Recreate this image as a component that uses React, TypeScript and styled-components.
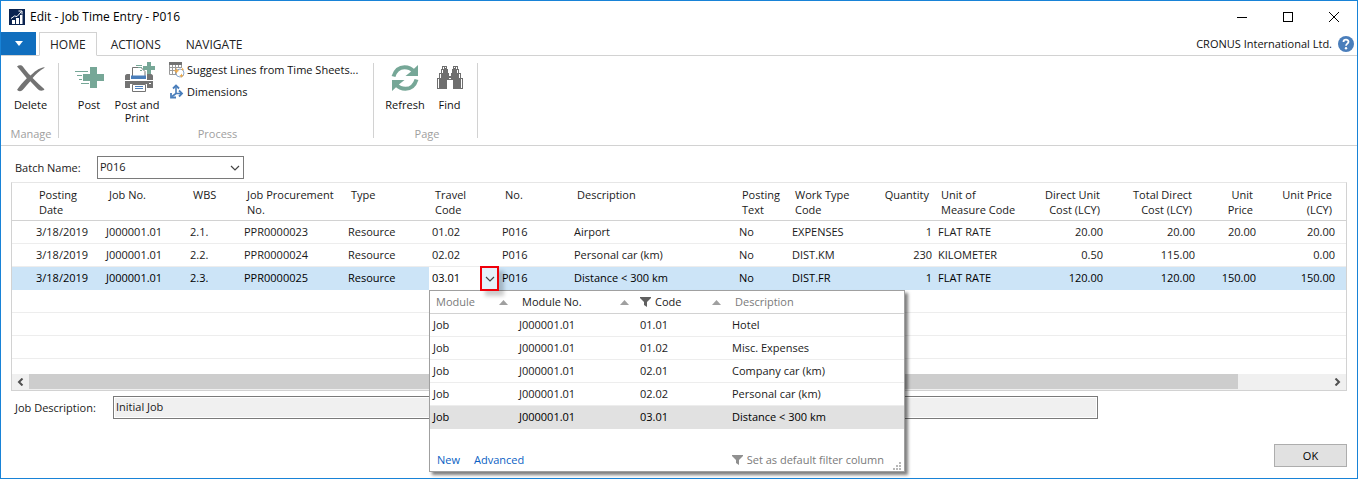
import React from 'react';
import styled, { createGlobalStyle, css } from 'styled-components';

const GlobalStyle = createGlobalStyle`
  * { box-sizing: border-box; }
  body {
    margin: 0;
    background: #fff;
    color: #1a1a1a;
    font-family: 'Open Sans', 'Noto Sans', sans-serif;
    font-size: 11px;
    line-height: 16px;
  }
  button, input, select { font: inherit; color: inherit; }
`;

const Window = styled.main`
  min-height: 100vh;
  display: flex;
  flex-direction: column;
  border: 1px solid #1883d7;
  background: #fff;
`;

const TitleBar = styled.header`
  display: flex;
  align-items: center;
  height: 31px;
  padding-left: 8px;
`;

const WindowTitle = styled.h1`
  flex: 1;
  margin: 0 0 0 5px;
  font-size: 12px;
  font-weight: 400;
  color: #000;
`;

const WindowButton = styled.button`
  display: flex;
  align-items: center;
  justify-content: center;
  width: 46px;
  height: 28px;
  padding: 0;
  border: 0;
  background: none;
`;

const TabBar = styled.nav`
  display: flex;
  align-items: flex-end;
  height: 24px;
  border-bottom: 1px solid #d2d2d2;
`;

const FileMenuButton = styled.button`
  display: flex;
  align-items: center;
  justify-content: center;
  width: 35px;
  height: 23px;
  margin-right: 3px;
  padding: 0;
  border: 0;
  background: #106ebe;
`;

const Tab = styled.button<{ $active?: boolean }>`
  height: 24px;
  padding: 2px 10px 0;
  margin: 0 3px -1px 0;
  border: 1px solid ${(p) => (p.$active ? '#d2d2d2' : 'transparent')};
  border-bottom-color: ${(p) => (p.$active ? '#fff' : 'transparent')};
  background: ${(p) => (p.$active ? '#fff' : 'none')};
  color: #222;
  font-size: 12px;
`;

const Company = styled.div`
  display: flex;
  align-items: center;
  gap: 6px;
  height: 23px;
  margin-left: auto;
  padding-right: 3px;
  color: #111;
`;

const HelpButton = styled.button`
  display: flex;
  padding: 0;
  border: 0;
  background: none;
`;

const Ribbon = styled.section`
  display: flex;
  height: 90px;
  padding: 7px 0;
  border-bottom: 1px solid #d2d2d2;
`;

const RibbonGroup = styled.div<{ $width: number }>`
  display: flex;
  flex-direction: column;
  justify-content: space-between;
  width: ${(p) => p.$width}px;
  border-right: 1px solid #d2d2d2;
`;

const GroupCommands = styled.div<{ $indent?: number }>`
  display: flex;
  align-items: flex-start;
  padding-left: ${(p) => p.$indent ?? 0}px;
`;

const GroupCaption = styled.div`
  padding-left: 3px;
  text-align: center;
  line-height: 8px;
  color: #a0a0a0;
`;

const LargeCommand = styled.button<{ $width: number }>`
  display: flex;
  flex-direction: column;
  align-items: center;
  width: ${(p) => p.$width}px;
  padding: 0;
  border: 0;
  background: none;
  color: #111;
  line-height: 13px;

  svg { display: block; margin-bottom: 3px; overflow: visible; }
`;

const CommandStack = styled.div`
  display: flex;
  flex-direction: column;
  align-items: flex-start;
  margin: -4px 0 0 9px;
`;

const SmallCommand = styled.button`
  display: flex;
  align-items: center;
  gap: 2px;
  height: 22px;
  padding: 0;
  border: 0;
  background: none;
  color: #111;
  white-space: nowrap;
`;

const Content = styled.section`
  flex: 1;
  display: flex;
  flex-direction: column;
  padding: 10px 10px 11px;
`;

const FieldRow = styled.div`
  display: flex;
  align-items: center;
  padding-left: 4px;
`;

const FieldLabel = styled.label<{ $width: number }>`
  width: ${(p) => p.$width}px;
  flex: none;
`;

const SelectShell = styled.div`
  display: grid;
  align-items: center;
  width: 147px;

  > * { grid-area: 1 / 1; }
  svg { justify-self: end; margin-right: 4px; pointer-events: none; }
`;

const BatchSelect = styled.select`
  appearance: none;
  width: 100%;
  height: 23px;
  padding: 0 20px 2px 2px;
  border: 1px solid #7a7a7a;
  border-radius: 0;
  background: #fff;
`;

const GridFrame = styled.div`
  margin-top: 3px;
  border: 1px solid #d2d2d2;
  border-top-color: #e6e6e6;
`;

const cellText = css<{ $right?: boolean }>`
  text-align: ${(p) => (p.$right ? 'right' : 'left')};
  font-weight: 400;
  white-space: nowrap;
`;

const LinesTable = styled.table`
  width: 100%;
  table-layout: fixed;
  border-collapse: separate;
  border-spacing: 0;
`;

const HeadCell = styled.th<{ $right?: boolean }>`
  ${cellText}
  height: 38px;
  padding: 4px 6px 3px;
  border-bottom: 1px solid #d2d2d2;
  line-height: 15px;
  vertical-align: top;
`;

const BodyCell = styled.td<{ $right?: boolean }>`
  ${cellText}
  height: 23px;
  padding: 0 3px;
  border-bottom: 1px solid #ededed;
`;

const BodyRow = styled.tr<{ $selected?: boolean }>`
  ${(p) =>
    p.$selected &&
    css`
      color: #000;
      > td { background: #cce4f7; border-bottom-color: #cce4f7; }
    `}
`;

const TravelCell = styled(BodyCell)`
  position: relative;
  padding: 0;
`;

const CodeEditor = styled.div`
  display: flex;
  height: 23px;
  margin-bottom: -1px;
`;

const CodeInput = styled.input`
  flex: 1;
  min-width: 0;
  height: 23px;
  padding: 0 3px 2px;
  border: 0;
  background: #fff;
`;

const CodeDropButton = styled.button`
  position: relative;
  z-index: 3;
  display: flex;
  align-items: center;
  justify-content: center;
  width: 19px;
  height: 25px;
  margin-top: -1px;
  padding: 0;
  border: 2px solid #f0000a;
  background: #e5f1fb;
  box-shadow: 5px 5px 4px rgba(0, 0, 0, 0.2);
`;

const Popup = styled.div`
  position: absolute;
  z-index: 2;
  top: calc(100% + 1px);
  left: 0;
  width: 476px;
  border: 1px solid #a0a0a0;
  background: #fff;
  box-shadow: 3px 3px 3px rgba(0, 0, 0, 0.5);
  color: #1a1a1a;
`;

const PopupHead = styled.th<{ $muted?: boolean }>`
  height: 23px;
  padding: 0 8px 0 6px;
  border-bottom: 1px solid #d2d2d2;
  color: ${(p) => (p.$muted ? '#7a7a7a' : '#1a1a1a')};
  font-weight: 400;
  text-align: left;
`;

const HeadLabel = styled.div<{ $filtered?: boolean }>`
  display: flex;
  align-items: center;
  gap: 4px;
  margin-left: ${(p) => (p.$filtered ? -3 : 0)}px;

  svg:last-child { margin-left: auto; }
`;

const PopupFooter = styled.div`
  display: flex;
  align-items: flex-end;
  height: 42px;
  padding: 0 2px 0 7px;
`;

const FooterLink = styled.a`
  margin: 0 14px 3px 0;
  color: #0a5fc4;
  text-decoration: none;
`;

const FilterNote = styled.button`
  display: flex;
  align-items: center;
  gap: 4px;
  margin: 0 9px 3px auto;
  padding: 0;
  border: 0;
  background: none;
  color: #7a7a7a;
`;

const ScrollBar = styled.div`
  display: grid;
  grid-template-columns: 17px minmax(0, 1fr) 17px;
  height: 16px;
  background: #f0f0f0;
`;

const ScrollButton = styled.button`
  display: flex;
  align-items: center;
  justify-content: center;
  padding: 0;
  border: 0;
  background: none;
`;

const ScrollThumb = styled.div`
  width: 93%;
  height: 15px;
  background: #cdcdcd;
`;

const DescriptionRow = styled(FieldRow)`
  margin-top: 5px;
  padding-right: 249px;
`;

const ReadOnlyInput = styled.input`
  flex: 1;
  min-width: 0;
  height: 23px;
  padding: 0 2px 2px;
  border: 1px solid #7a7a7a;
  background: #f0f0f0;
  box-shadow: inset 0 0 0 1px #fff;
`;

const Actions = styled.footer`
  display: flex;
  justify-content: flex-end;
  margin-top: auto;
`;

const OkButton = styled.button`
  width: 73px;
  height: 23px;
  padding: 0;
  border: 1px solid #adadad;
  background: #e1e1e1;
  color: #000;
`;

const AppLogo = () => (
  <svg width="16" height="16" viewBox="0 0 16 16" aria-hidden="true">
    <rect width="16" height="16" fill="#0b2350" />
    <path d="M3 11h3v4H3zM7 9h3v6H7zM11 6h2.500v9H11z" fill="#fff" />
    <path d="M2 9.500 5.500 7 8 7.500 12.500 2.500M9.500 2h3.500v3.500" fill="none" stroke="#fff" strokeWidth="1" />
  </svg>
);

const DeleteIcon = () => (
  <svg width="32" height="32" viewBox="0 0 32 32" aria-hidden="true">
    <path
      d="M2 3.500C4 1.800 6.500 2 8 3.800 10.500 7 13 10.500 15.500 12.500 19 9 23.500 5 29 4.200c.8 0 .5.600.2.900C25 7.500 20.500 11.500 17.600 15c3.500 3.800 7.400 7.500 11.600 11 .4.500-.2 1-.8 1.200-2.500 1-4.300.4-6-1.400-2.400-2.600-4.700-5-7.100-7.500-2.800 3.200-5.300 6.200-7.700 8.700-2 1.900-4.700 1.400-5.500-.2C4 23.500 8 19.200 11.800 15.200 8.500 11.300 5.300 7 2 3.500z"
      fill="#737373"
    />
  </svg>
);

const PostIcon = () => (
  <svg width="32" height="32" viewBox="0 0 32 32" aria-hidden="true">
    <path d="M17 4h7v7h7v7h-7v7h-7v-7h-7v-7h7z" fill="#76a797" />
    <path d="M2 8.500h13M4 12.500h5M6 16.500h3M8 20.500h8" stroke="#76a797" strokeWidth="1" fill="none" />
  </svg>
);

const PostPrintIcon = () => (
  <svg width="32" height="32" viewBox="0 0 32 32" aria-hidden="true">
    <path d="M11.500 13V4.500H20l4 4V13" fill="#fff" stroke="#737373" />
    <path d="M6 11h3v6h17v-6h4c1 0 2 1 2 2v12h-6v-4H9v4H4V13c0-1 1-2 2-2z" fill="#737373" />
    <path d="M10 12.500h15V16H10z" fill="#4a7ebb" />
    <path d="M4 17.500h28" stroke="#fff" />
    <path d="M11.500 21.500h13v7h-13z" fill="#fff" stroke="#737373" />
    <path d="M14 23.500h8M14 25.500h8" stroke="#4a7ebb" />
    <path d="M26-1h4v4h4v4h-4v4h-4V7h-4V3h4z" fill="#76a797" />
    <path d="M15 2.500h6M17 4.500h4M19 7.500h2" stroke="#76a797" />
    <path d="M28 20.500h2" stroke="#fff" />
  </svg>
);

const RefreshIcon = () => (
  <svg width="32" height="32" viewBox="0 0 32 32" aria-hidden="true">
    <path d="M4.500 13.500C6.500 7 10.500 4.200 15.500 4.200c4 0 7 1.500 9 4" fill="none" stroke="#76a797" strokeWidth="4" />
    <path d="M29 2v11H16.500l5-4z" fill="#76a797" />
    <path d="M27.500 16.500C25.500 23 21.500 25.800 16.500 25.800c-4 0-7-1.500-9-4" fill="none" stroke="#76a797" strokeWidth="4" />
    <path d="M3 28V17h12.500l-5 4z" fill="#76a797" />
  </svg>
);

const FindIcon = () => (
  <svg width="32" height="32" viewBox="0 0 32 32" aria-hidden="true">
    <path
      d="M8 3h5v3h1v4h1v3h2v-3h1V6h1V3h5v3h1v4h2v5h2v11H19v-9h-6v9H3V15h2v-5h2V6h1z"
      fill="#6e6e6e"
    />
    <path
      d="M9.500 4v2M11.500 4v1M8.500 7v3M6.500 11v4M4.500 16v9M22.500 4v2M20.500 4v1M23.500 7v3M25.500 11v4M27.500 16v9M15 15.500h2"
      stroke="#fff"
      fill="none"
    />
  </svg>
);

const SuggestIcon = () => (
  <svg width="16" height="16" viewBox="0 0 16 16" aria-hidden="true">
    <path d="M.5 2v10.500H8M12.500 2v4M3.500 2v10M6.500 2v10M9.500 2v4M1 5.500h11M1 8.500h6" fill="none" stroke="#9a9a9a" />
    <path d="M0 0h13v3H0z" fill="#737373" />
    <circle cx="11" cy="11" r="4" fill="#fff" stroke="#8aa8cc" />
    <path d="m7.500 6 .9 2 2 .8-2 .9-.9 2-.9-2-2-.9 2-.8zM12.500 11.500l.7 1.500 1.500.7-1.500.7-.7 1.500-.7-1.500-1.500-.7 1.500-.7zM13.500 5.500l.5 1.300 1.300.5-1.300.5-.5 1.300-.5-1.300-1.300-.5 1.300-.5z" fill="#e9a94f" />
  </svg>
);

const DimensionsIcon = () => (
  <svg width="16" height="16" viewBox="0 0 16 16" aria-hidden="true">
    <path d="M7 3v6.500L3 12.500M7 9.500h6" fill="none" stroke="#4a7ebb" strokeWidth="1.600" />
    <path d="M4 4.500 7 1.500l3 3M10 6.500l3 3-3 3M2 9v4.500h5" fill="none" stroke="#4a7ebb" strokeWidth="1.800" />
  </svg>
);

const HelpIcon = () => (
  <svg width="16" height="16" viewBox="0 0 16 16" aria-hidden="true">
    <circle cx="8" cy="8" r="8" fill="#4a7ebb" />
    <path d="M5.500 6c0-3 5-3 5-.2C10.500 7.500 8 7.700 8 9.800" fill="none" stroke="#fff" strokeWidth="1.800" />
    <circle cx="8" cy="12.200" r="1.200" fill="#fff" />
  </svg>
);

const Chevron = () => (
  <svg width="10" height="6" viewBox="0 0 10 6" aria-hidden="true">
    <path d="m1 1 4 4 4-4" fill="none" stroke="#444" strokeWidth="1.200" />
  </svg>
);

const ScrollArrow = ({ right }: { right?: boolean }) => (
  <svg width="7" height="8" viewBox="0 0 7 8" aria-hidden="true">
    <path d={right ? 'm1.500.5 3.500 3.500-3.500 3.500' : 'M5.500.5 2 4l3.500 3.500'} fill="none" stroke="#505050" strokeWidth="2" />
  </svg>
);

const SortArrow = () => (
  <svg width="9" height="5" viewBox="0 0 9 5" aria-hidden="true">
    <path d="M4.500 0 9 5H0z" fill="#a0a0a0" />
  </svg>
);

const Funnel = ({ color }: { color: string }) => (
  <svg width="11" height="10" viewBox="0 0 11 10" aria-hidden="true">
    <path d="M0 0h11v1L7 5v5L4 8V5L0 1z" fill={color} />
  </svg>
);

const Grip = () => (
  <svg width="9" height="9" viewBox="0 0 9 9" aria-hidden="true">
    <path d="M6 0h2v2H6zM3 3h2v2H3zM6 3h2v2H6zM0 6h2v2H0zM3 6h2v2H3zM6 6h2v2H6z" fill="#b8b8b8" />
  </svg>
);

type Column = { lines: string[]; width?: number; right?: boolean };

const columns: Column[] = [
  { lines: ['Posting', 'Date'], width: 70 },
  { lines: ['Job No.'], width: 84 },
  { lines: ['WBS'], width: 54 },
  { lines: ['Job Procurement', 'No.'], width: 104 },
  { lines: ['Type'], width: 84 },
  { lines: ['Travel', 'Code'], width: 70 },
  { lines: ['No.'], width: 72 },
  { lines: ['Description'] },
  { lines: ['Posting', 'Text'], width: 53 },
  { lines: ['Work Type', 'Code'], width: 76 },
  { lines: ['Quantity'], width: 70, right: true },
  { lines: ['Unit of', 'Measure Code'], width: 92 },
  { lines: ['Direct Unit', 'Cost (LCY)'], width: 79, right: true },
  { lines: ['Total Direct', 'Cost (LCY)'], width: 92, right: true },
  { lines: ['Unit', 'Price'], width: 61, right: true },
  { lines: ['Unit Price', '(LCY)'], width: 79, right: true },
];

const rows: string[][] = [
  ['3/18/2019', 'J000001.01', '2.1.', 'PPR0000023', 'Resource', '01.02', 'P016', 'Airport', 'No', 'EXPENSES', '1', 'FLAT RATE', '20.00', '20.00', '20.00', '20.00'],
  ['3/18/2019', 'J000001.01', '2.2.', 'PPR0000024', 'Resource', '02.02', 'P016', 'Personal car (km)', 'No', 'DIST.KM', '230', 'KILOMETER', '0.50', '115.00', '', '0.00'],
  ['3/18/2019', 'J000001.01', '2.3.', 'PPR0000025', 'Resource', '03.01', 'P016', 'Distance < 300 km', 'No', 'DIST.FR', '1', 'FLAT RATE', '120.00', '120.00', '150.00', '150.00'],
];

const travelColumn = 5;
const selectedRow = 2;

const travelCodes: string[][] = [
  ['Job', 'J000001.01', '01.01', 'Hotel'],
  ['Job', 'J000001.01', '01.02', 'Misc. Expenses'],
  ['Job', 'J000001.01', '02.01', 'Company car (km)'],
  ['Job', 'J000001.01', '02.02', 'Personal car (km)'],
  ['Job', 'J000001.01', '03.01', 'Distance < 300 km'],
];

const PopupRow = styled.tr<{ $selected?: boolean }>`
  ${(p) =>
    p.$selected &&
    css`
      color: #000;
      > td { background: #e1e1e1; border-bottom-color: #e1e1e1; }
    `}
`;

const TravelCodePopup = () => (
  <Popup>
    <LinesTable>
      <colgroup>
        <col width={86} />
        <col width={121} />
        <col width={92} />
        <col />
      </colgroup>
      <thead>
        <tr>
          <PopupHead $muted><HeadLabel><span>Module</span><SortArrow /></HeadLabel></PopupHead>
          <PopupHead><HeadLabel><span>Module No.</span><SortArrow /></HeadLabel></PopupHead>
          <PopupHead><HeadLabel $filtered><Funnel color="#606060" /><span>Code</span><SortArrow /></HeadLabel></PopupHead>
          <PopupHead $muted><HeadLabel><span>Description</span></HeadLabel></PopupHead>
        </tr>
      </thead>
      <tbody>
        {travelCodes.map((code, i) => (
          <PopupRow key={code[2]} $selected={i === travelCodes.length - 1}>
            {code.map((value, c) => <BodyCell key={c}>{value}</BodyCell>)}
          </PopupRow>
        ))}
      </tbody>
    </LinesTable>
    <PopupFooter>
      <FooterLink href="#new">New</FooterLink>
      <FooterLink href="#advanced">Advanced</FooterLink>
      <FilterNote type="button"><Funnel color="#909090" />Set as default filter column</FilterNote>
      <Grip />
    </PopupFooter>
  </Popup>
);

export default function App() {
  return (
    <>
      <GlobalStyle />
      <Window>
        <TitleBar>
          <AppLogo />
          <WindowTitle>Edit - Job Time Entry - P016</WindowTitle>
          <WindowButton aria-label="Minimize">
            <svg width="10" height="10"><path d="M0 5.500h10" stroke="#000" /></svg>
          </WindowButton>
          <WindowButton aria-label="Maximize">
            <svg width="10" height="10"><rect x=".5" y=".5" width="9" height="9" fill="none" stroke="#000" /></svg>
          </WindowButton>
          <WindowButton aria-label="Close">
            <svg width="10" height="10"><path d="m0 0 10 10M10 0 0 10" stroke="#000" /></svg>
          </WindowButton>
        </TitleBar>

        <TabBar>
          <FileMenuButton aria-label="Application menu">
            <svg width="8" height="5"><path d="M0 0h8L4 5z" fill="#fff" /></svg>
          </FileMenuButton>
          <Tab $active>HOME</Tab>
          <Tab>ACTIONS</Tab>
          <Tab>NAVIGATE</Tab>
          <Company>
            <span>CRONUS International Ltd.</span>
            <HelpButton aria-label="Help"><HelpIcon /></HelpButton>
          </Company>
        </TabBar>

        <Ribbon>
          <RibbonGroup $width={58}>
            <GroupCommands $indent={2}>
              <LargeCommand $width={56}><DeleteIcon />Delete</LargeCommand>
            </GroupCommands>
            <GroupCaption>Manage</GroupCaption>
          </RibbonGroup>
          <RibbonGroup $width={315}>
            <GroupCommands $indent={5}>
              <LargeCommand $width={50}><PostIcon />Post</LargeCommand>
              <LargeCommand $width={46}><PostPrintIcon /><span>Post and<br />Print</span></LargeCommand>
              <CommandStack>
                <SmallCommand><SuggestIcon />Suggest Lines from Time Sheets...</SmallCommand>
                <SmallCommand><DimensionsIcon />Dimensions</SmallCommand>
              </CommandStack>
            </GroupCommands>
            <GroupCaption>Process</GroupCaption>
          </RibbonGroup>
          <RibbonGroup $width={104}>
            <GroupCommands $indent={8}>
              <LargeCommand $width={46}><RefreshIcon />Refresh</LargeCommand>
              <LargeCommand $width={43}><FindIcon />Find</LargeCommand>
            </GroupCommands>
            <GroupCaption>Page</GroupCaption>
          </RibbonGroup>
        </Ribbon>

        <Content>
          <FieldRow>
            <FieldLabel $width={82} htmlFor="batch">Batch Name:</FieldLabel>
            <SelectShell>
              <BatchSelect id="batch" defaultValue="P016">
                <option>P016</option>
              </BatchSelect>
              <Chevron />
            </SelectShell>
          </FieldRow>

          <GridFrame>
            <LinesTable>
              <colgroup>
                <col width={21} />
                {columns.map((c, i) => <col key={i} width={c.width} />)}
                <col width={8} />
              </colgroup>
              <thead>
                <tr>
                  <HeadCell />
                  {columns.map((c, i) => (
                    <HeadCell key={i} $right={c.right}>
                      {c.lines[0]}
                      {c.lines[1] && <><br />{c.lines[1]}</>}
                    </HeadCell>
                  ))}
                  <HeadCell />
                </tr>
              </thead>
              <tbody>
                {rows.map((row, r) => (
                  <BodyRow key={r} $selected={r === selectedRow}>
                    <BodyCell />
                    {row.map((value, c) =>
                      r === selectedRow && c === travelColumn ? (
                        <TravelCell key={c}>
                          <CodeEditor>
                            <CodeInput aria-label="Travel Code" defaultValue={value} />
                            <CodeDropButton aria-label="Choose travel code"><Chevron /></CodeDropButton>
                          </CodeEditor>
                          <TravelCodePopup />
                        </TravelCell>
                      ) : (
                        <BodyCell key={c} $right={columns[c].right}>{value}</BodyCell>
                      ),
                    )}
                    <BodyCell />
                  </BodyRow>
                ))}
                {[0, 1, 2].map((r) => (
                  <BodyRow key={r}><BodyCell colSpan={columns.length + 2} /></BodyRow>
                ))}
              </tbody>
              <tfoot>
                <tr><td colSpan={columns.length + 2} height={15} /></tr>
              </tfoot>
            </LinesTable>
            <ScrollBar>
              <ScrollButton aria-label="Scroll left"><ScrollArrow /></ScrollButton>
              <ScrollThumb />
              <ScrollButton aria-label="Scroll right"><ScrollArrow right /></ScrollButton>
            </ScrollBar>
          </GridFrame>

          <DescriptionRow>
            <FieldLabel $width={98} htmlFor="job-description">Job Description:</FieldLabel>
            <ReadOnlyInput id="job-description" readOnly value="Initial Job" />
          </DescriptionRow>

          <Actions>
            <OkButton>OK</OkButton>
          </Actions>
        </Content>
      </Window>
    </>
  );
}
